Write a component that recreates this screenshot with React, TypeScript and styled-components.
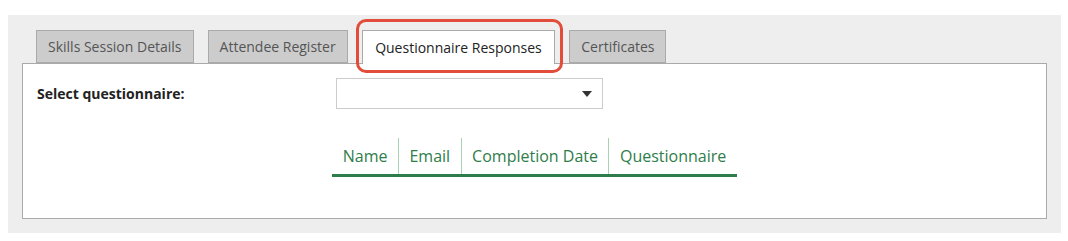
import styled, { createGlobalStyle } from 'styled-components';

const tabs = ['Skills Session Details', 'Attendee Register', 'Questionnaire Responses', 'Certificates'];
const activeTab = 2;
const columns = ['Name', 'Email', 'Completion Date', 'Questionnaire'];

export default function App() {
	return (
		<>
			<GlobalStyle />
			<Wrapper>
				<TabRow>
					{tabs.map((t, i) => (
						<Tab key={t} $active={i === activeTab}>
							{t}
							{i === activeTab && <Highlight />}
						</Tab>
					))}
				</TabRow>
				<Panel>
					<FieldRow>
						<Label>Select questionnaire:</Label>
						<Select>
							<Caret />
						</Select>
					</FieldRow>
					<Table>
						<thead>
							<tr>
								{columns.map((c) => (
									<Th key={c}>{c}</Th>
								))}
							</tr>
						</thead>
					</Table>
				</Panel>
			</Wrapper>
		</>
	);
}

const GlobalStyle = createGlobalStyle`
	body {
		margin: 0;
		background: #fff;
		font-family: 'Open Sans', 'Noto Sans', sans-serif;
	}
`;

const Wrapper = styled.div`
	margin: 15px 7px 0 8px;
	padding: 15px 14px 14px;
	background: #eeeeee;
`;

const TabRow = styled.div`
	display: flex;
	gap: 14px;
	padding-left: 14px;
	height: 33px;
	align-items: flex-start;
`;

const Tab = styled.div<{ $active: boolean }>`
	position: relative;
	z-index: ${(p) => (p.$active ? 2 : 1)};
	box-sizing: border-box;
	height: ${(p) => (p.$active ? '34px' : '33px')};
	padding: ${(p) => (p.$active ? '0 12.5px' : '0 11px')};
	display: flex;
	align-items: center;
	font-size: 14px;
	color: ${(p) => (p.$active ? '#222' : '#555')};
	background: ${(p) => (p.$active ? '#fff' : '#cccccc')};
	border: 1px solid #aaaaaa;
	border-bottom: ${(p) => (p.$active ? 'none' : '1px solid #aaaaaa')};
	white-space: nowrap;
`;

const Highlight = styled.span`
	position: absolute;
	left: -7px;
	right: -9px;
	top: -12px;
	bottom: -9px;
	border: 3px solid #e24c3b;
	border-radius: 10px;
	pointer-events: none;
`;

const Panel = styled.div`
	position: relative;
	z-index: 1;
	background: #fff;
	border: 1px solid #aaaaaa;
	padding: 14px 14px 41px;
`;

const FieldRow = styled.div`
	display: grid;
	grid-template-columns: 299px 267px;
	align-items: center;
`;

const Label = styled.div`
	font-size: 14px;
	font-weight: 700;
	color: #222;
`;

const Select = styled.div`
	box-sizing: border-box;
	height: 31px;
	border: 1px solid #cccccc;
	background: #fff;
	display: flex;
	align-items: center;
	justify-content: flex-end;
	padding-right: 10px;
`;

const Caret = styled.span`
	width: 0;
	height: 0;
	border-left: 5px solid transparent;
	border-right: 5px solid transparent;
	border-top: 6px solid #333;
`;

const Table = styled.table`
	margin: 29px auto 0;
	border-collapse: collapse;
	border-bottom: 3px solid #2e7d4a;
`;

const Th = styled.th`
	height: 36px;
	padding: 0 10.5px 0 10.5px;
	font-size: 16px;
	font-weight: 400;
	color: #2e7d4a;
	text-align: left;
	white-space: nowrap;
	& + & {
		border-left: 1px solid #a9d1b6;
	}
`;
